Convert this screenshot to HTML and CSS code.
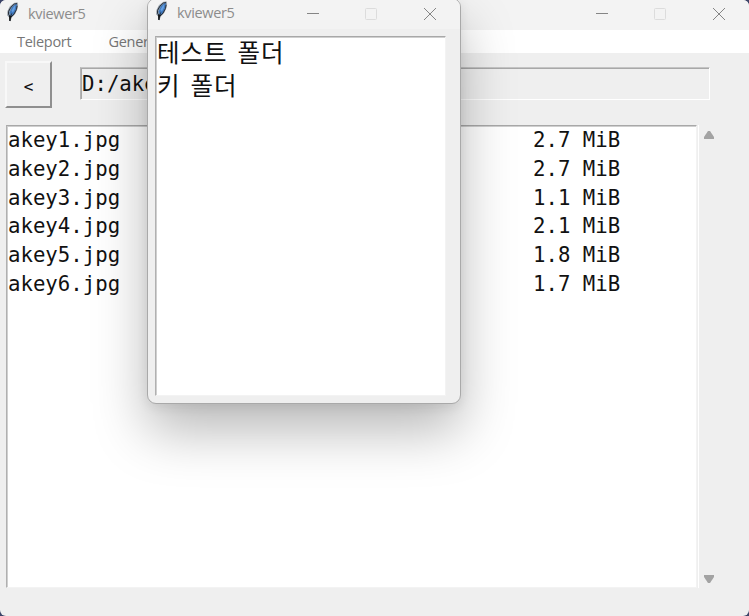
FILE: index.html
```html
<!DOCTYPE html>
<html lang="ko">
<head>
<meta charset="utf-8">
<title>kviewer5</title>
<link rel="stylesheet" href="styles.css">
</head>
<body>
<svg class="defs" aria-hidden="true">
  <symbol id="feather" viewBox="0 0 14 20">
    <path d="M3.9 19 3.6 15.7 1.6 13.3 2 8.8 4.3 4.2 8.1 1.4 11.3.8 11.7 3.1 10.7 7.8 8.5 12.5 5.4 15.7Z" fill="#8296ab" stroke="#9aa1a8" stroke-width=".8"/>
    <path d="M5 14.7 3.8 10.2 6 5.3 9.4 2.2 11 1.8 10.4 6.2 8.2 11.5Z" fill="#3f78bd"/>
    <path d="M5.4 8.8 7.6 4.9 9.4 3.3 8.8 6.9 6.9 10.6Z" fill="#65a0e3"/>
    <path d="M3.8 19 4.2 15.2 5.7 11.5M4.3 14.6 2.6 12.5 2.4 9.7 4.8 5.3 8.3 2 11 1.6M5 14.9 8 12.1 10.5 7.4 11.1 3.8" fill="none" stroke="#262d38" stroke-width="1"/>
    <path d="M3 14 6 13.8 4.9 16.2 4.4 19.2 3.3 18.4Z" fill="#151719"/>
  </symbol>
</svg>
<div class="window main">
  <header class="titlebar">
    <svg class="logo"><use href="#feather"/></svg>
    <span class="title">kviewer5</span>
    <svg class="controls" viewBox="0 0 130 14"><path class="line" d="M1 7.5h12"/><rect class="box" x="59.5" y="2.5" width="11" height="11" rx="1"/><path class="line" d="m118 2 12 12m0-12-12 12"/></svg>
  </header>
  <nav class="menu"><span>Teleport</span><span>Gener</span></nav>
  <div class="toolbar">
    <button class="back">&lt;</button>
    <div class="path">D:/ake</div>
  </div>
  <main class="content">
    <div class="files">
      <div class="row"><span>akey1.jpg</span><span>2.7 MiB</span></div>
      <div class="row"><span>akey2.jpg</span><span>2.7 MiB</span></div>
      <div class="row"><span>akey3.jpg</span><span>1.1 MiB</span></div>
      <div class="row"><span>akey4.jpg</span><span>2.1 MiB</span></div>
      <div class="row"><span>akey5.jpg</span><span>1.8 MiB</span></div>
      <div class="row"><span>akey6.jpg</span><span>1.7 MiB</span></div>
    </div>
    <div class="scrollbar">
      <svg viewBox="0 0 10 8"><path d="M4 0h2l4 6v2H0V6Z"/></svg>
      <svg viewBox="0 0 10 8"><path d="M0 0h10v2L6 8H4L0 2Z"/></svg>
    </div>
  </main>
</div>
<div class="window popup">
  <header class="titlebar">
    <svg class="logo"><use href="#feather"/></svg>
    <span class="title">kviewer5</span>
    <svg class="controls" viewBox="0 0 130 14"><path class="line" d="M1 7.5h12"/><rect class="box" x="59.5" y="2.5" width="11" height="11" rx="1"/><path class="line" d="m118 2 12 12m0-12-12 12"/></svg>
  </header>
  <div class="folders"><div>테스트 폴더</div><div>키 폴더</div></div>
</div>
</body>
</html>
```
FILE: styles.css
```css
* { box-sizing: border-box; }
body {
  margin: 0;
  width: 749px;
  height: 616px;
  overflow: hidden;
  position: relative;
  background: #3c4468;
  color: #111;
  font-family: "Open Sans", "Noto Sans CJK KR", sans-serif;
}
.defs { position: absolute; width: 0; height: 0; }
.window { background: #efefef; overflow: hidden; }
.main { width: 749px; height: 616px; border-radius: 6px; }
.titlebar {
  display: flex;
  align-items: flex-start;
  height: 30px;
  background: #f3f3f3;
}
.logo { width: 14px; height: 20px; margin: 2px 0 0 6px; flex: none; }
.title {
  margin: 4px 0 0 8px;
  font-size: 14.5px;
  line-height: 20px;
  letter-spacing: -.35px;
  color: #8c8c8c;
}
.controls { width: 130px; height: 14px; margin: 6px 24px 0 auto; flex: none; }
.line { fill: none; stroke: #858585; stroke-width: 1; }
.box { fill: none; stroke: #dcdcdc; stroke-width: 1; }
.menu {
  display: flex;
  gap: 37px;
  height: 23px;
  padding-left: 17px;
  background: #fff;
  font-size: 14.5px;
  line-height: 24px;
  letter-spacing: -.28px;
  color: #777;
}
.toolbar { display: flex; height: 72px; padding: 8px 39px 0 5px; }
.back {
  width: 47px;
  height: 47px;
  padding: 3px 0 0;
  border: 2px solid;
  border-color: #f8f8f8 #8f8f8f #8f8f8f #f8f8f8;
  background: #efefef;
  color: #111;
  font: 16px "DejaVu Sans Mono", monospace;
}
.path {
  flex: 1;
  height: 33px;
  margin: 6px 0 0 28px;
  border: 1px solid;
  border-color: #c4c4c4 #fff #fff #b4b4b4;
  box-shadow: inset 1px 1px #a8a8a8;
  padding: 1px 0 0 1px;
  font: 20.7px/31px "DejaVu Sans Mono", monospace;
}
.content { display: flex; height: 463px; padding-left: 6px; }
.files {
  width: 691px;
  border: 1px solid;
  border-color: #a8a8a8 #f3f3f3 #f3f3f3 #b0b0b0;
  box-shadow: inset 1px 1px #cfcfcf;
  padding: 0 0 0 1px;
  background: #fff;
  font: 20.7px/28.8px "DejaVu Sans Mono", monospace;
}
.row { display: flex; white-space: pre; }
.row span:first-child { width: 525px; }
.scrollbar {
  display: flex;
  flex-direction: column;
  justify-content: space-between;
  width: 17px;
  padding: 6px 0 5px 5px;
  border-left: 1px solid #fff;
  margin-left: 1px;
}
.scrollbar svg { width: 10px; height: 8px; fill: #a3a3a3; }
.popup {
  position: absolute;
  left: 147px;
  top: -2px;
  width: 314px;
  height: 406px;
  border: 1px solid #a9a9a9;
  border-radius: 9px;
  box-shadow: 0 27px 54px rgba(0,0,0,.28), 0 3px 12px rgba(0,0,0,.08);
}
.popup .logo { margin-left: 7px; }
.popup .title { margin-top: 4px; }
.popup .controls { margin-top: 7px; }
.folders {
  width: 291px;
  height: 360px;
  margin: 7px 0 0 7px;
  border: 1px solid;
  border-color: #a8a8a8 #f3f3f3 #f3f3f3 #b0b0b0;
  box-shadow: inset 1px 1px #cfcfcf;
  padding: 1px 0 0 1px;
  background: #fff;
  font: 400 24.5px/33px "Noto Sans CJK KR", sans-serif;
  letter-spacing: 1px;
  word-spacing: 2px;
}
.folders div { margin-top: -3px; }
.folders div + div { margin-top: 0; }
```
